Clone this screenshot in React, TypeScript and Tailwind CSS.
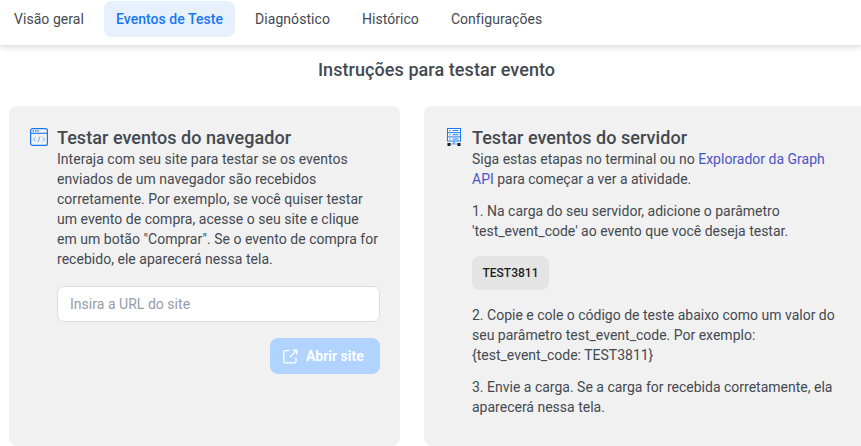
const TABS = ["Visão geral", "Eventos de Teste", "Diagnóstico", "Histórico", "Configurações"];

function BrowserIcon() {
  return (
    <svg width="18" height="18" viewBox="0 0 18 18" fill="none" className="shrink-0">
      <rect x="0.6" y="0.6" width="16.8" height="16.8" rx="2" stroke="#1877f2" strokeWidth="1.2" />
      <path d="M1 5.3H17" stroke="#1877f2" strokeWidth="1.1" />
      <path d="M2.6 3H3.9M5 3H6.3M7.4 3H8.7" stroke="#1877f2" strokeWidth="1.3" />
      <path d="M5.6 9.2L3.4 11.3L5.6 13.4M12.4 9.2L14.6 11.3L12.4 13.4M9.9 8.6L8.1 14" stroke="#6ea8f5" strokeWidth="1" />
    </svg>
  );
}

function ServerIcon() {
  return (
    <svg width="14" height="18" viewBox="0 0 14 18" fill="none" className="shrink-0">
      <rect x="0.5" y="0.5" width="13" height="12.5" fill="#fff" stroke="#1877f2" />
      <path d="M0.5 4.7H13.5M0.5 8.9H13.5" stroke="#1877f2" />
      <path d="M2 2.6H3.4M5.5 2.6H11.5M2 6.8H3.4M5.5 6.8H11.5M2 11H3.4M5.5 11H11.5" stroke="#1877f2" />
      <path d="M7 13V16" stroke="#6ea8f5" strokeWidth="2" />
      <path d="M3 16H11" stroke="#6ea8f5" />
      <rect x="0.5" y="15" width="3" height="3" fill="#1c1c1c" />
      <rect x="10.5" y="15" width="3" height="3" fill="#1c1c1c" />
    </svg>
  );
}

function ExternalIcon() {
  return (
    <svg width="15" height="15" viewBox="0 0 15 15" fill="none" stroke="#fff" strokeWidth="1.3" className="shrink-0">
      <path d="M6.5 1.6H2A1.2 1.2 0 0 0 0.8 2.8V12.6A1.2 1.2 0 0 0 2 13.8H11.8A1.2 1.2 0 0 0 13 12.6V8.5" />
      <path d="M7 8L13.6 1.4M9.4 1.2H13.8V5.6" />
    </svg>
  );
}

export default function App() {
  return (
    <div className="w-[861px] h-[446px] overflow-hidden bg-white font-['Roboto',sans-serif] text-[14px] leading-5 text-[#444950]">
      <div className="h-[45px] pl-[2px] pt-px flex gap-2 items-start bg-white tracking-[0.05px] shadow-[0_2px_6px_rgba(0,0,0,0.16)] relative">
        {TABS.map((tab, i) => (
          <div
            key={tab}
            className={
              i === 1
                ? "h-9 px-3 flex items-center rounded-lg bg-[#e7f0fd] text-[#1877f2] font-medium"
                : "h-9 px-3 flex items-center text-[#444950]"
            }
          >
            {tab}
          </div>
        ))}
      </div>

      <h1 className="mt-[15px] pl-3 text-center text-[18px] leading-5 tracking-[0.07px] font-medium text-[#444950]">
        Instruções para testar evento
      </h1>

      <div className="mt-[26px] ml-[9px] flex gap-6 items-start">
        <section className="w-[391px] h-[340px] shrink-0 rounded-lg bg-[#f1f1f1] pl-[21px] pr-5 pt-[21px] flex gap-[9px]">
          <div className="pt-px">
            <BrowserIcon />
          </div>
          <div className="w-[323px] shrink-0 tracking-[0.03px]">
            <h2 className="text-[18px] leading-[22px] tracking-[0.05px] font-medium">Testar eventos do navegador</h2>
            <p>
              Interaja com seu site para testar se os eventos enviados de um navegador são recebidos corretamente. Por
              exemplo, se você quiser testar um evento de compra, acesse o seu site e clique em um botão "Comprar". Se
              o evento de compra for recebido, ele aparecerá nessa tela.
            </p>
            <input
              placeholder="Insira a URL do site"
              className="mt-[17px] w-full h-9 rounded-[7px] border border-[#dadde1] bg-white px-3 outline-none placeholder:text-[#969ca6]"
            />
            <div className="mt-4 flex justify-end">
              <button className="w-[110px] h-9 pl-[13px] rounded-lg bg-[#b0d4ff] flex items-center gap-2 text-white font-semibold">
                <ExternalIcon />
                Abrir site
              </button>
            </div>
          </div>
        </section>

        <section className="w-[460px] h-[340px] shrink-0 rounded-lg bg-[#f1f1f1] pl-[23px] pt-[21px] flex gap-[11px]">
          <div className="pt-px">
            <ServerIcon />
          </div>
          <div className="w-[368px] shrink-0">
            <h2 className="text-[18px] leading-[22px] tracking-[0.05px] font-medium">Testar eventos do servidor</h2>
            <p>
              Siga estas etapas no terminal ou no <span className="text-[#4a55c5]">Explorador da Graph API</span> para
              começar a ver a atividade.
            </p>
            <p className="mt-3">
              1. Na carga do seu servidor, adicione o parâmetro 'test_event_code' ao evento que você deseja testar.
            </p>
            <div className="mt-[15px] w-[77px] h-[34px] rounded-lg bg-[#e4e4e4] flex items-center justify-center text-[12px] font-medium text-[#1c1e21]">
              TEST3811
            </div>
            <p className="mt-[15px]">
              2. Copie e cole o código de teste abaixo como um valor do seu parâmetro test_event_code. Por exemplo:
              {" {test_event_code: TEST3811}"}
            </p>
            <p className="mt-3">3. Envie a carga. Se a carga for recebida corretamente, ela aparecerá nessa tela.</p>
          </div>
        </section>
      </div>
    </div>
  );
}
